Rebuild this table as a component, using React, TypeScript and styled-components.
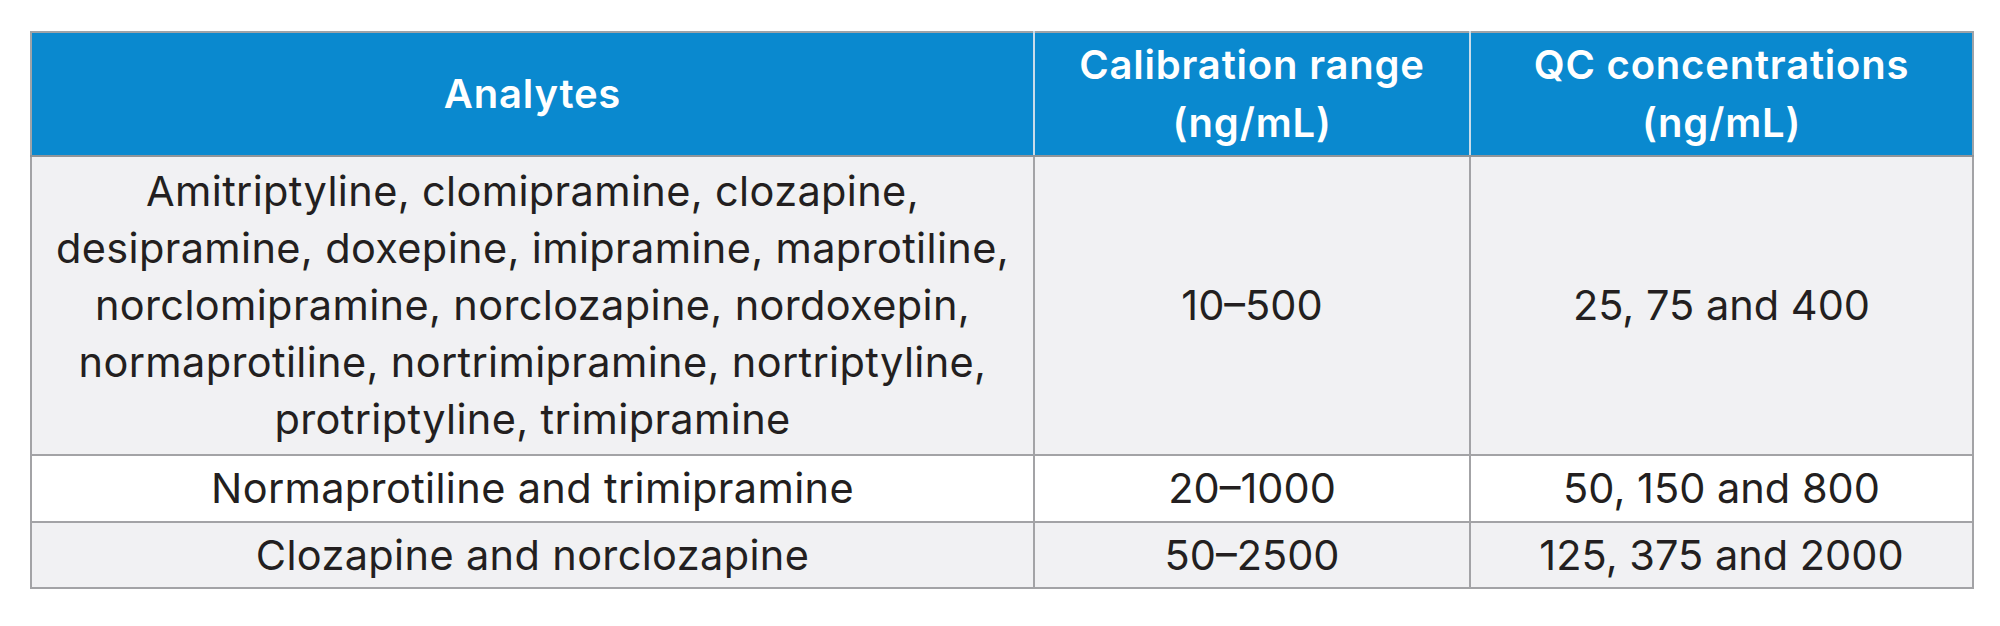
import React from "react";
import styled, { createGlobalStyle } from "styled-components";

const Global = createGlobalStyle`
  html, body { margin: 0; padding: 0; background: #ffffff; }
  body { font-family: Inter, "Noto Sans", "Liberation Sans", sans-serif; color: #231f20; }
`;

const Page = styled.div`
  padding: 31px 28px 0 30px;
  width: 2000px;
  box-sizing: border-box;
`;

const Table = styled.table`
  border-collapse: collapse;
  width: 1942px;
  table-layout: fixed;
`;

const HeadCell = styled.th<{ $w: number }>`
  width: ${(p) => p.$w}px;
  height: 124px;
  padding: 0 6px;
  box-sizing: border-box;
  background: #0a89cf;
  color: #ffffff;
  font-size: 40px;
  font-weight: 600;
  letter-spacing: 0.8px;
  line-height: 58px;
  text-align: center;
  vertical-align: middle;
  border-top: 2px solid #9ea3a8;
  border-bottom: 2px solid #8f959a;
  border-left: 2px solid #c9dcea;
  border-right: 2px solid #c9dcea;
  &:first-child { border-left: 2px solid #9ea3a8; }
  &:last-child { border-right: 2px solid #9ea3a8; }
`;

const Row = styled.tr<{ $shade: boolean; $h: number }>`
  height: ${(p) => p.$h}px;
  background: ${(p) => (p.$shade ? "#f1f1f3" : "#ffffff")};
`;

const Cell = styled.td<{ $num?: boolean }>`
  padding: 0 6px;
  box-sizing: border-box;
  font-size: 41.5px;
  font-weight: 400;
  letter-spacing: ${(p) => (p.$num ? "0" : "0.35px")};
  line-height: 57px;
  text-align: center;
  vertical-align: middle;
  border: 2px solid #a3a3a6;
  color: #231f20;
`;

const rows = [
  {
    h: 299,
    shade: true,
    a: [
      "Amitriptyline, clomipramine, clozapine,",
      "desipramine, doxepine, imipramine, maprotiline,",
      "norclomipramine, norclozapine, nordoxepin,",
      "normaprotiline, nortrimipramine, nortriptyline,",
      "protriptyline, trimipramine",
    ],
    b: "10–500",
    c: "25, 75 and 400",
  },
  { h: 67, shade: false, a: ["Normaprotiline and trimipramine"], b: "20–1000", c: "50, 150 and 800" },
  { h: 66, shade: true, a: ["Clozapine and norclozapine"], b: "50–2500", c: "125, 375 and 2000" },
];

export default function App() {
  return (
    <Page>
      <Global />
      <Table>
        <thead>
          <tr>
            <HeadCell $w={1003}>Analytes</HeadCell>
            <HeadCell $w={436}>
              Calibration range
              <br />
              (ng/mL)
            </HeadCell>
            <HeadCell $w={503}>
              QC concentrations
              <br />
              (ng/mL)
            </HeadCell>
          </tr>
        </thead>
        <tbody>
          {rows.map((r, i) => (
            <Row key={i} $shade={r.shade} $h={r.h}>
              <Cell>
                {r.a.map((l, j) => (
                  <React.Fragment key={j}>
                    {j > 0 && <br />}
                    {l}
                  </React.Fragment>
                ))}
              </Cell>
              <Cell $num>{r.b}</Cell>
              <Cell $num>{r.c}</Cell>
            </Row>
          ))}
        </tbody>
      </Table>
    </Page>
  );
}
